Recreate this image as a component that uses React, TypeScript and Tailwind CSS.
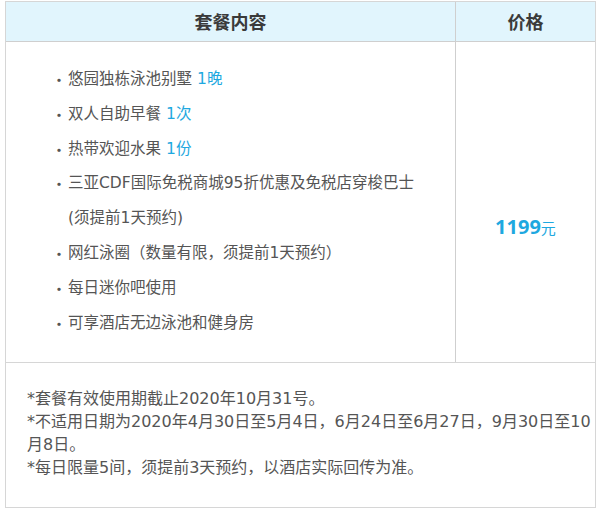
import React from "react";

const items: { text: string; extra?: string; note?: string }[] = [
  { text: "悠园独栋泳池别墅", extra: "1晚" },
  { text: "双人自助早餐", extra: "1次" },
  { text: "热带欢迎水果", extra: "1份" },
  { text: "三亚CDF国际免税商城95折优惠及免税店穿梭巴士", note: "(须提前1天预约)" },
  { text: "网红泳圈（数量有限，须提前1天预约）" },
  { text: "每日迷你吧使用" },
  { text: "可享酒店无边泳池和健身房" },
];

const cjk = { fontFamily: '"Noto Sans CJK SC", "Noto Sans", sans-serif' };
const mixed = { fontFamily: '"DejaVu Sans", "Noto Sans CJK SC", sans-serif' };

export default function App() {
  return (
    <div className="w-[600px] h-[511px] bg-white pt-[1px] pl-[5px]" style={cjk}>
      <div className="w-[591px] border border-[#d6d6d6]">
        {/* header */}
        <div className="grid grid-cols-[450px_1fr] h-[40px] bg-[#e1f5fd] border-b border-[#cfcfcf] text-[18px] font-bold text-[#3a3a3a]">
          <div className="flex items-center justify-center border-r border-[#cfcfcf]">套餐内容</div>
          <div className="flex items-center justify-center">价格</div>
        </div>

        {/* body */}
        <div className="grid grid-cols-[450px_1fr] border-b border-[#d6d6d6]">
          <div className="border-r border-[#cfcfcf] pt-[20px] pb-[22px] pl-[44px] text-[15.5px] leading-[34.8px] text-[#555]" style={mixed}>
            {items.map((it) => (
              <div key={it.text} className="flex">
                <span className="w-[18px] shrink-0 text-center" style={cjk}>·</span>
                <div>
                  <div>
                    {it.text}
                    {it.extra && <span className="ml-[5px] text-[#1ea8e0]">{it.extra}</span>}
                  </div>
                  {it.note && <div>{it.note}</div>}
                </div>
              </div>
            ))}
          </div>
          <div className="flex justify-center pt-[172px]">
            <span className="text-[#1ea8e0] leading-[26px]">
              <span className="text-[20px] font-bold" style={{ fontFamily: '"Open Sans", sans-serif' }}>1199</span>
              <span className="text-[15px]">元</span>
            </span>
          </div>
        </div>

        {/* notes */}
        <div className="pt-[24px] pb-[28px] pl-[21px] text-[16px] leading-[23px] text-[#555] whitespace-nowrap" style={mixed}>
          <div>*套餐有效使用期截止2020年10月31号。</div>
          <div>*不适用日期为2020年4月30日至5月4日，6月24日至6月27日，9月30日至10<br />月8日。</div>
          <div>*每日限量5间，须提前3天预约，以酒店实际回传为准。</div>
        </div>
      </div>
    </div>
  );
}
